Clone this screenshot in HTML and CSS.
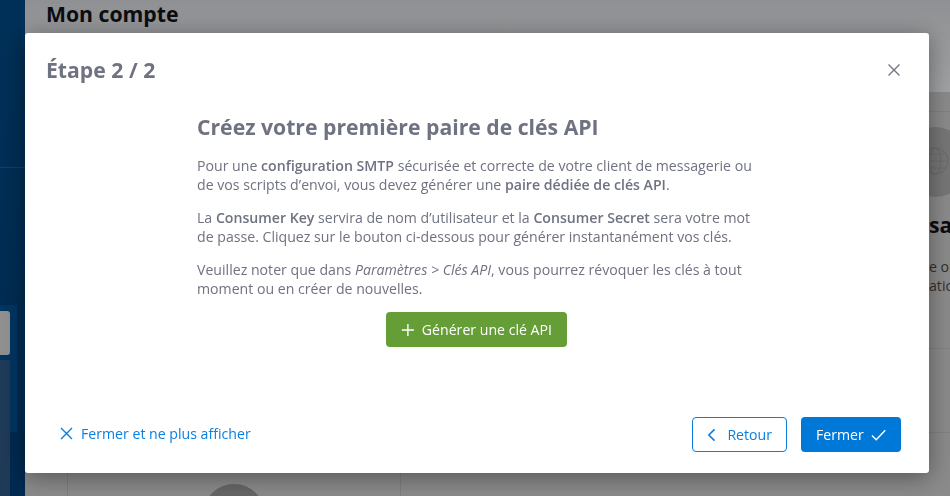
FILE: index.html
```html
<!DOCTYPE html>
<html lang="fr">
<head>
    <meta charset="UTF-8">
    <meta name="viewport" content="width=device-width, initial-scale=1.0">
    <title>Mon compte</title>
    <link rel="stylesheet" href="styles.css">
</head>
<body>
    <div class="app">
        <aside class="sidebar">
            <div class="side-line"></div>
            <div class="side-group">
                <div class="side-item"></div>
                <div class="side-panel"></div>
            </div>
        </aside>
        <main class="content">
            <header class="page-head"><h1>Mon compte</h1></header>
            <div class="page-body">
                <div class="left-card"><div class="left-avatar"></div></div>
                <div class="right-card">
                    <div class="right-band"></div>
                    <div class="right-main">
                        <div class="globe">
                            <svg width="44" height="44" viewBox="0 0 44 44" fill="none" stroke="#a5a5a5" stroke-width="1.2">
                                <circle cx="22" cy="21" r="13"/>
                                <ellipse cx="22" cy="21" rx="6" ry="13"/>
                                <path d="M9 21h26M11 14h22M11 28h22"/>
                            </svg>
                        </div>
                        <h2>sa</h2>
                        <p>e ou<br>atio</p>
                    </div>
                    <div class="right-next"></div>
                </div>
            </div>
        </main>
    </div>

    <div class="overlay"></div>

    <div class="modal">
        <div class="modal-head">
            <h3>Étape 2 / 2</h3>
            <svg class="close-icon" width="14" height="14" viewBox="0 0 14 14" fill="none" stroke="#6f7280" stroke-width="1.3">
                <path d="M1.5 1.5l11 11M12.5 1.5l-11 11"/>
            </svg>
        </div>
        <div class="modal-body">
            <h2>Créez votre première paire de clés API</h2>
            <p>Pour une <b>configuration SMTP</b> sécurisée et correcte de votre client de messagerie ou de vos scripts d’envoi, vous devez générer une <b>paire dédiée de clés API</b>.</p>
            <p>La <b>Consumer Key</b> servira de nom d’utilisateur et la <b>Consumer Secret</b> sera votre mot de passe. Cliquez sur le bouton ci-dessous pour générer instantanément vos clés.</p>
            <p>Veuillez noter que dans <i>Paramètres &gt; Clés API</i>, vous pourrez révoquer les clés à tout moment ou en créer de nouvelles.</p>
            <div class="generate-row">
                <button class="btn btn-green">
                    <svg width="16" height="16" viewBox="0 0 16 16" fill="none" stroke="#fff" stroke-width="1.6"><path d="M8 1v14M1 8h14"/></svg>
                    Générer une clé API
                </button>
            </div>
        </div>
        <div class="modal-foot">
            <a class="dismiss" href="#">
                <svg width="13" height="13" viewBox="0 0 13 13" fill="none" stroke="#0a7fe0" stroke-width="1.4"><path d="M1 1l11 11M12 1L1 12"/></svg>
                Fermer et ne plus afficher
            </a>
            <div class="foot-actions">
                <button class="btn btn-outline">
                    <svg width="10" height="14" viewBox="0 0 10 14" fill="none" stroke="#0a7fe0" stroke-width="1.7"><path d="M8 1L2 7l6 6"/></svg>
                    Retour
                </button>
                <button class="btn btn-blue">
                    Fermer
                    <svg width="16" height="12" viewBox="0 0 16 12" fill="none" stroke="#fff" stroke-width="1.5"><path d="M1 6.5l4.5 4.5L15 1"/></svg>
                </button>
            </div>
        </div>
    </div>
</body>
</html>
```

FILE: styles.css
```css
* {
    box-sizing: border-box;
}
html, body {
    height: 100%;
}
body {
    margin: 0;
    overflow: hidden;
    font-family: "Open Sans", "Liberation Sans", sans-serif;
    color: #6f7280;
    background: #ffffff;
}
.app {
    display: flex;
    height: 496px;
}
.sidebar {
    width: 25px;
    flex-shrink: 0;
    background: linear-gradient(180deg, #004a88, #00407a);
    padding-top: 167px;
}
.side-line {
    height: 1px;
    background: #275f8c;
}
.side-group {
    width: 17px;
    height: 127px;
    margin-top: 137px;
    padding-top: 6px;
    background: #005296;
}
.side-item {
    height: 44px;
    width: 10px;
    background: #dedede;
    border-radius: 0 3px 3px 0;
}
.side-panel {
    height: 136px;
    width: 10px;
    margin-top: 5px;
    background: #305a86;
}
.content {
    flex: 1;
    min-width: 0;
    background: #d4d4d4;
}
.page-head {
    height: 92px;
    padding: 0 21px;
    background: linear-gradient(180deg, #dbdee2, #f6f8fa);
}
.page-head h1 {
    margin: 0;
    font-size: 21.2px;
    line-height: 28px;
    font-weight: 700;
    color: #111318;
}
.page-body {
    display: flex;
    justify-content: space-between;
    height: 404px;
    padding-left: 42px;
}
.left-card {
    width: 334px;
    height: 100%;
    padding-top: 392px;
    overflow: hidden;
    border-left: 1px solid #bfc1c4;
    border-right: 1px solid #bfc1c4;
    display: flex;
    justify-content: center;
}
.left-avatar {
    width: 62px;
    height: 62px;
    flex-shrink: 0;
    background: #9d9d9d;
    border-radius: 50%;
}
.right-card {
    width: 70px;
    overflow: hidden;
    white-space: nowrap;
}
.right-band {
    height: 20px;
    border-bottom: 1px solid #c6c6c6;
}
.right-main {
    height: 237px;
    padding-top: 15px;
    border-bottom: 1px solid #c6c6c6;
}
.right-next {
    height: 84px;
    border-bottom: 1px solid #c6c6c6;
}
.globe {
    width: 70px;
    height: 70px;
    margin-left: 20px;
    border-radius: 50%;
    background: #b5b5b5;
    display: flex;
    align-items: center;
    justify-content: flex-start;
    padding-left: 13px;
}
.right-card h2 {
    margin: 0;
    padding: 14px 0 0 49px;
    font-size: 21.2px;
    line-height: 28px;
    font-weight: 700;
    color: #111318;
}
.right-card p {
    margin: 18px 0 0;
    padding-left: 49px;
    font-size: 14.13px;
    line-height: 19px;
    color: #4b4b4b;
}
.overlay {
    position: fixed;
    inset: 0;
    background: rgba(0, 0, 0, 0.35);
}
.modal {
    position: fixed;
    left: 25px;
    top: 33px;
    width: 904px;
    height: 440px;
    background: #ffffff;
    border-radius: 3px;
    box-shadow: 0 4px 24px rgba(0, 0, 0, 0.4);
    display: flex;
    flex-direction: column;
}
.modal-head {
    display: flex;
    justify-content: space-between;
    align-items: center;
    padding: 23px 28px 0 21px;
}
.modal-head h3 {
    margin: 0;
    font-size: 21.2px;
    line-height: 28px;
    font-weight: 700;
    color: #6f7280;
}
.modal-body {
    flex: 1;
    width: 559px;
    margin-left: 172px;
    padding-top: 29px;
}
.modal-body h2 {
    margin: 0 0 15px;
    font-size: 21.2px;
    line-height: 28px;
    font-weight: 700;
    color: #6f7280;
}
.modal-body p {
    margin: 0 0 14px;
    font-size: 14.13px;
    line-height: 19px;
}
.modal-body b {
    font-weight: 600;
}
.generate-row {
    display: flex;
    justify-content: center;
    margin-top: 1px;
}
.btn {
    display: inline-flex;
    align-items: center;
    gap: 7px;
    height: 35px;
    padding: 0 14px;
    border: 1px solid transparent;
    border-radius: 4px;
    font-family: inherit;
    font-size: 14.13px;
    white-space: nowrap;
}
.btn-green {
    width: 181px;
    color: #ffffff;
    background: #659e37;
}
.btn-outline {
    width: 95px;
    gap: 11px;
    color: #0a7fe0;
    background: #ffffff;
    border-color: #0a7fe0;
}
.btn-blue {
    width: 100px;
    color: #ffffff;
    background: #0078d7;
}
.modal-foot {
    display: flex;
    justify-content: space-between;
    align-items: center;
    padding: 0 28px 21px 35px;
}
.foot-actions {
    display: flex;
    gap: 14px;
}
.dismiss {
    display: inline-flex;
    align-items: center;
    gap: 8px;
    margin-bottom: 2px;
    font-size: 14.13px;
    color: #0a7fe0;
    text-decoration: none;
}
```
